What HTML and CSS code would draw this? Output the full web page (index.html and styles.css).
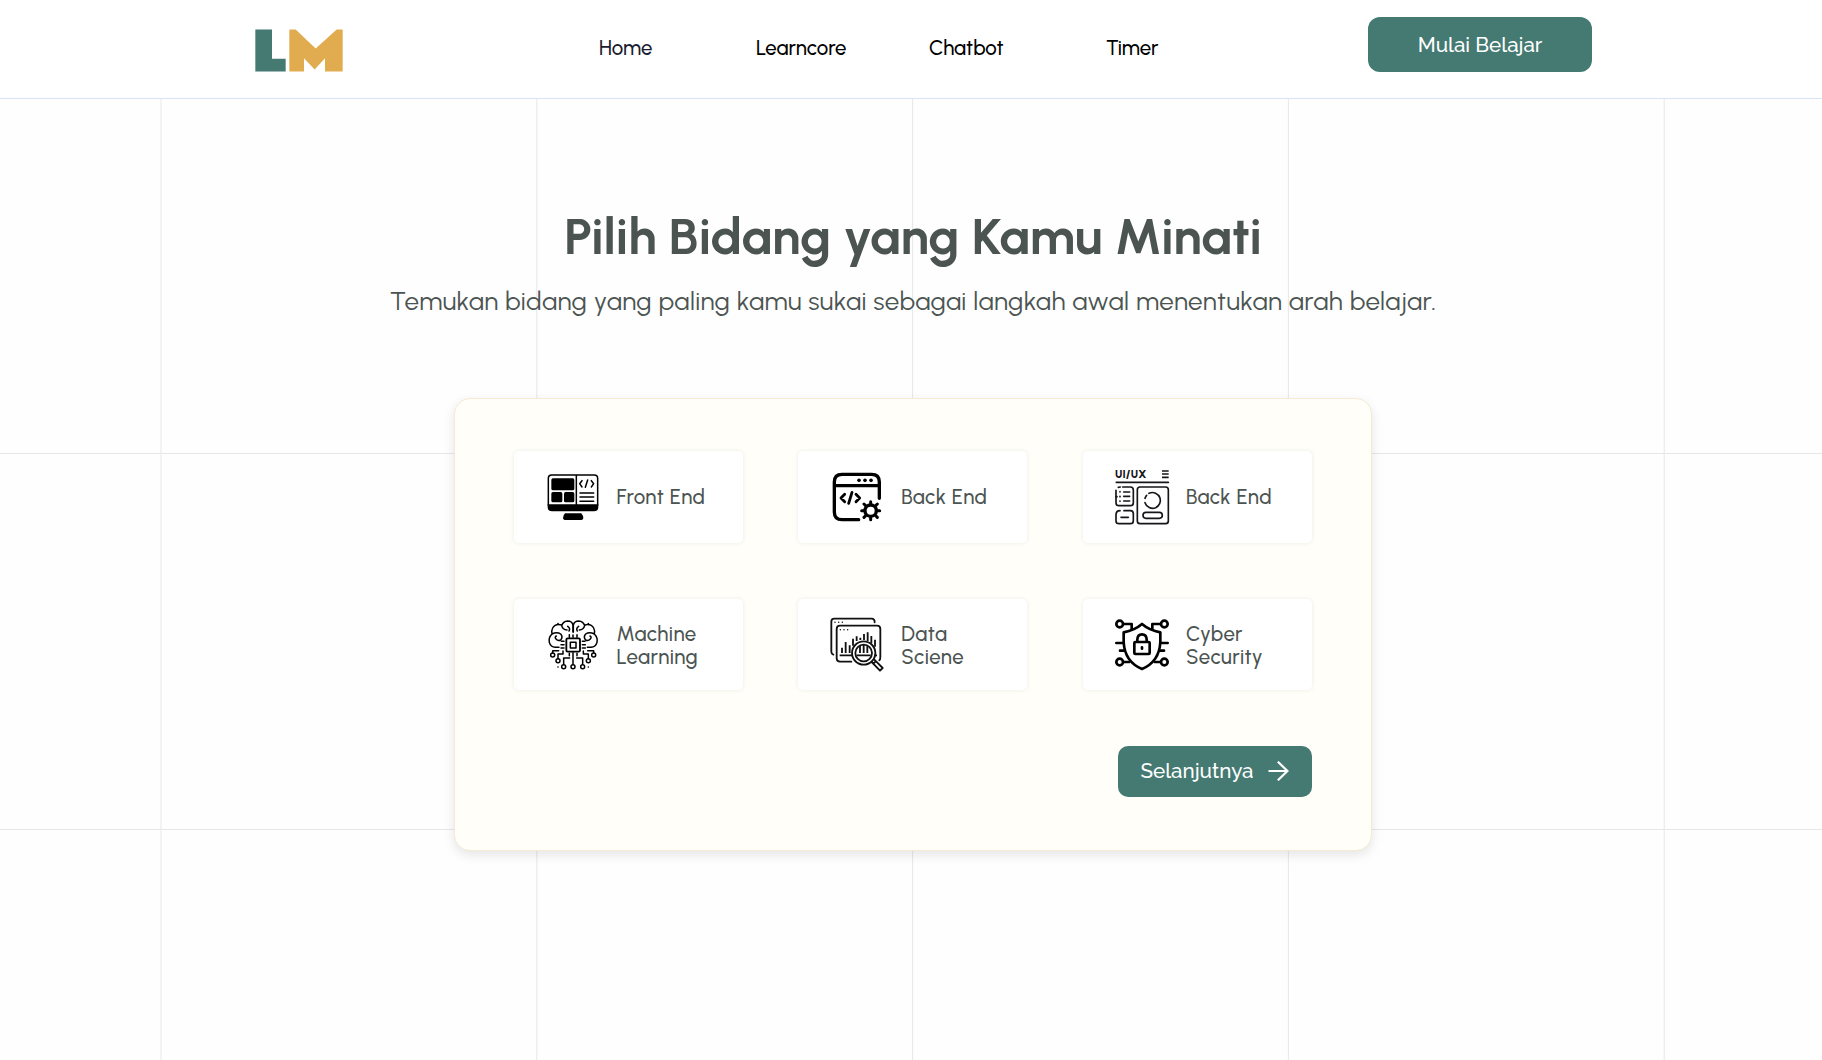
FILE: index.html
```html
<!DOCTYPE html>
<html lang="id">
<head>
<meta charset="utf-8">
<title>Pilih Bidang</title>
<link rel="stylesheet" href="styles.css">
</head>
<body>
<header class="header">
  <svg class="logo" viewBox="45 88 264 128" role="img" aria-label="LM">
    <path fill="#457a72" d="M46 89H96V177H137V215H46Z"/>
    <path fill="#e1ac4f" d="M148 89H167L227 146L290 89H308V215H255V175L224 209L192 175V215H148Z"/>
  </svg>
  <nav class="nav">
    <a class="nav-link nav-home">Home</a>
    <a class="nav-link nav-learncore">Learncore</a>
    <a class="nav-link nav-chatbot">Chatbot</a>
    <a class="nav-link nav-timer">Timer</a>
  </nav>
  <button class="btn btn-start"><span>Mulai Belajar</span></button>
</header>
<main class="main">
  <h1 class="title">Pilih Bidang yang Kamu Minati</h1>
  <p class="subtitle">Temukan bidang yang paling kamu sukai sebagai langkah awal menentukan arah belajar.</p>
  <section class="card">
    <div class="fields">
      <div class="field">
        <svg class="icon" viewBox="317 254 162 162" fill="none" stroke="#000" stroke-width="4.5" stroke-linecap="round" stroke-linejoin="round">
          <path d="M324 360V279Q324 269 334 269H462Q472 269 472 279V360M408 269V360"/>
          <path fill="#000" stroke="none" d="M322 357H474V365Q474 378 461 378H335Q322 378 322 365ZM374 384H423Q429 391 429 399Q428 404 423 404H373Q368 403 368 398Q368 390 374 384Z"/>
          <g fill="#000" stroke="none"><rect x="333" y="279" width="69" height="36" rx="5"/><rect x="333" y="320" width="33" height="31" rx="5"/><rect x="371" y="320" width="31" height="31" rx="5"/></g>
          <path d="M425 286L418 295L425 305M453 286L460 295L453 305M442 284L435 306M419 323H460M419 335H460M419 348H460"/>
        </svg>
        <span class="label">Front End</span>
      </div>
      <div class="field">
        <svg class="icon" viewBox="121 89 162 162" fill="none" stroke="#000" stroke-width="10" stroke-linecap="round" stroke-linejoin="round">
          <path d="M207 238H157Q134 238 134 215V125Q134 102 157 102H246Q269 102 269 125V174M134 136H269"/>
          <path stroke-width="8.5" d="M165 162L154 173L165 184M199 162L210 173L199 184M187 156L177 189"/>
          <g fill="#000" stroke="none"><circle cx="208" cy="120" r="5.5"/><circle cx="226" cy="120" r="5.5"/><circle cx="244" cy="120" r="5.5"/></g>
          <circle cx="243" cy="211" r="17" stroke-width="10"/>
          <path stroke-width="9" d="M243 192V184M243 230V238M224 211H216M262 211H270M230 198L223 191M256 198L263 191M230 224L223 231M256 224L263 231"/>
        </svg>
        <span class="label">Back End</span>
      </div>
      <div class="field">
        <svg class="icon" viewBox="135 89 162 162" fill="none" stroke="#16161a" stroke-width="5" stroke-linecap="round" stroke-linejoin="round">
          <text class="icon-text" x="135" y="113" textLength="94" lengthAdjust="spacing" fill="#16161a" stroke="none">UI/UX</text>
          <path stroke-linecap="butt" d="M276 92H296M276 101H296M276 111H296"/>
          <path stroke-width="5.5" d="M139 126H295"/>
          <path d="M138 154V187Q138 196 147 196H181Q190 196 190 187V149Q190 140 181 140H158M138 154V150M145 141Q149 140 151 140"/>
          <path d="M150 154V155M150 168V169M138 169H141M150 182V183M161 155H179M161 168H179M161 182H179"/>
          <path d="M138 222V241Q138 250 147 250H181Q190 250 190 241V220Q190 211 181 211H162M138 222Q139 211 150 211M153 231H175"/>
          <rect x="202" y="140" width="93" height="110" rx="8"/>
          <path d="M237 159A24 24 0 0 1 270 173A24 24 0 0 1 257 202A24 24 0 0 1 225 187M225 174Q227 169 230 165"/>
          <rect x="219" y="216" width="58" height="18" rx="9"/>
        </svg>
        <span class="label">Back End</span>
      </div>
      <div class="field">
        <svg class="icon" viewBox="137 82 162 162" fill="none" stroke="#000" stroke-width="4.5" stroke-linecap="round" stroke-linejoin="round">
          <g id="brain-half">
            <path d="M218 124V103Q215 91 202 91Q188 92 184 105Q187 117 200 118M184 103Q165 98 157 112Q153 119 155 130Q170 122 181 130Q189 139 181 148Q173 152 167 145Q162 139 168 136M155 130Q144 141 147 155Q151 169 165 170H176M202 107Q211 113 206 121"/>
            <path d="M191 152H183M191 162H182M191 172H182M207 140V132M207 188V195M175 180H157V187M188 181V190H173V204M208 202H190V221"/>
            <circle cx="157" cy="193" r="6"/><circle cx="173" cy="210" r="6"/><circle cx="190" cy="228" r="6"/>
            <path stroke-width="5" d="M173 99V99.1M173 229V229.1"/>
          </g>
          <use href="#brain-half" transform="matrix(-1 0 0 1 437 0)"/>
          <rect x="198" y="143" width="41" height="40" rx="4" stroke-width="5.5"/>
          <rect x="210" y="155" width="17" height="17"/>
          <path d="M218 140V133M218 186V220"/>
          <circle cx="218" cy="228" r="6"/>
        </svg>
        <span class="label">Machine<br>Learning</span>
      </div>
      <div class="field">
        <svg class="icon" viewBox="121 82 162 162" fill="none" stroke="#111" stroke-width="5.5" stroke-linecap="round" stroke-linejoin="round">
          <path d="M131 192Q125 190 125 183V93Q125 84 134 84H246Q255 84 255 95M185 213H151Q141 213 141 203V115Q141 105 151 105H262Q272 105 272 115V199Q272 207 269 209"/>
          <path stroke-width="4.5" d="M136 95V95.1M147 95V95.1M158 95V95.1M152 117V117.1M163 117V117.1M174 117V117.1"/>
          <path stroke-linecap="butt" d="M150 194H189M157 187V171M168 187V154M180 187V164M190 165V144M201 151V137M212 148V141M223 148V130M234 151V125M245 158V136M256 168V147M262 194H254M211 187V166M222 187V162M233 187V166M201 194H243"/>
          <circle cx="222" cy="187" r="35"/><circle cx="222" cy="187" r="25"/>
          <path d="M246 214L271 240L279 232L254 207M251 219L258 212"/>
        </svg>
        <span class="label">Data<br>Sciene</span>
      </div>
      <div class="field">
        <svg class="icon" viewBox="135 82 162 162" fill="none" stroke="#000" stroke-width="8" stroke-linecap="round" stroke-linejoin="round">
          <path d="M216 100Q194 119 161 125V154Q164 213 216 235Q268 213 271 154V125Q238 119 216 100Z"/>
          <g id="circuit-half">
            <circle cx="149" cy="100" r="10"/><circle cx="149" cy="214" r="10"/>
            <path stroke-linecap="butt" d="M160 100H185V116M160 214H180"/>
            <path d="M139 157H158M150 180H164"/>
          </g>
          <use href="#circuit-half" transform="matrix(-1 0 0 1 432 0)"/>
          <rect x="193" y="154" width="46" height="36" rx="3"/>
          <path d="M202 153V146Q203 131 216 131Q229 131 230 146V153M216 170V174"/>
        </svg>
        <span class="label">Cyber<br>Security</span>
      </div>
    </div>
    <button class="btn btn-next">
      <span>Selanjutnya</span>
      <svg class="arrow" viewBox="566 94 62 60" fill="none" stroke="#fff" stroke-width="6.5"><path d="M567 124H623M595 96L624 124L595 152"/></svg>
    </button>
  </section>
</main>
</body>
</html>
```
FILE: styles.css
```css
* { box-sizing: border-box; }

body {
  margin: 0;
  height: 1060px;
  overflow: hidden;
  font-family: Urbanist, Lato, sans-serif;
  color: #4b5451;
  background-color: #fefefe;
  background-image:
    linear-gradient(to right, #e7e7e9 1px, transparent 1px),
    linear-gradient(to bottom, #e7e7e9 1px, transparent 1px);
  background-size: 375.8px 100%, 100% 376px;
  background-position: 160.5px 0, 0 77px;
}

.header {
  display: flex;
  align-items: flex-start;
  height: 99px;
  padding-left: 255px;
  background: #fff;
  border-bottom: 1px solid #d9e3f8;
}

.logo { width: 88px; height: 43px; margin-top: 29px; }

.nav { display: flex; width: 769px; margin: 36px 0 0 256px; }
.nav-link {
  font-size: 20.4px;
  line-height: 24px;
  font-weight: 500;
  color: #000;
  white-space: nowrap;
}
.nav-home { width: 157px; color: #1c1c30; }
.nav-learncore { width: 173px; }
.nav-chatbot { width: 177px; }

.btn {
  display: flex;
  align-items: center;
  justify-content: center;
  padding: 0;
  border: 0;
  background: #457a72;
  color: #fff;
  font-family: Raleway, Lato, sans-serif;
  font-weight: 500;
  font-size: 20.6px;
  white-space: nowrap;
}
.btn-start { width: 224px; height: 55px; margin-top: 17px; border-radius: 12px; }

.main { display: flex; flex-direction: column; align-items: center; padding-left: 4px; }

.title {
  margin: 108px 0 0;
  font-size: 50.9px;
  line-height: 60px;
  font-weight: 700;
  white-space: nowrap;
}
.subtitle {
  margin: 18px 0 0;
  font-size: 26px;
  line-height: 32px;
  font-weight: 400;
  letter-spacing: .37px;
  white-space: nowrap;
}

.card {
  display: flex;
  flex-direction: column;
  width: 918px;
  height: 453px;
  margin-top: 81px;
  padding: 52px 58px 0;
  background: #fffef9;
  border: 1px solid #f5ebd3;
  border-radius: 16px;
  box-shadow: 0 4px 12px rgba(0, 0, 0, .1);
}
.fields {
  display: grid;
  grid-template-columns: repeat(3, 229px);
  grid-auto-rows: 91.5px;
  gap: 56.3px 55.7px;
  padding-left: .6px;
}
.field {
  display: flex;
  align-items: center;
  gap: 17px;
  padding-left: 32px;
  background: #fff;
  border-radius: 5px;
  box-shadow: 0 0 4px rgba(70, 90, 85, .11);
}
.icon { width: 54px; height: 54px; flex: none; overflow: visible; }
.icon-text { font: 900 32px Urbanist, Inter, sans-serif; }
.label {
  padding-top: 2px;
  font-size: 20.4px;
  line-height: 23px;
  font-weight: 500;
  letter-spacing: .45px;
  white-space: nowrap;
}

.btn-next {
  width: 194px;
  height: 51px;
  margin: 55.7px 0 0 605px;
  gap: 15px;
  border-radius: 10px;
}
.arrow { width: 21px; height: 20px; }
```
